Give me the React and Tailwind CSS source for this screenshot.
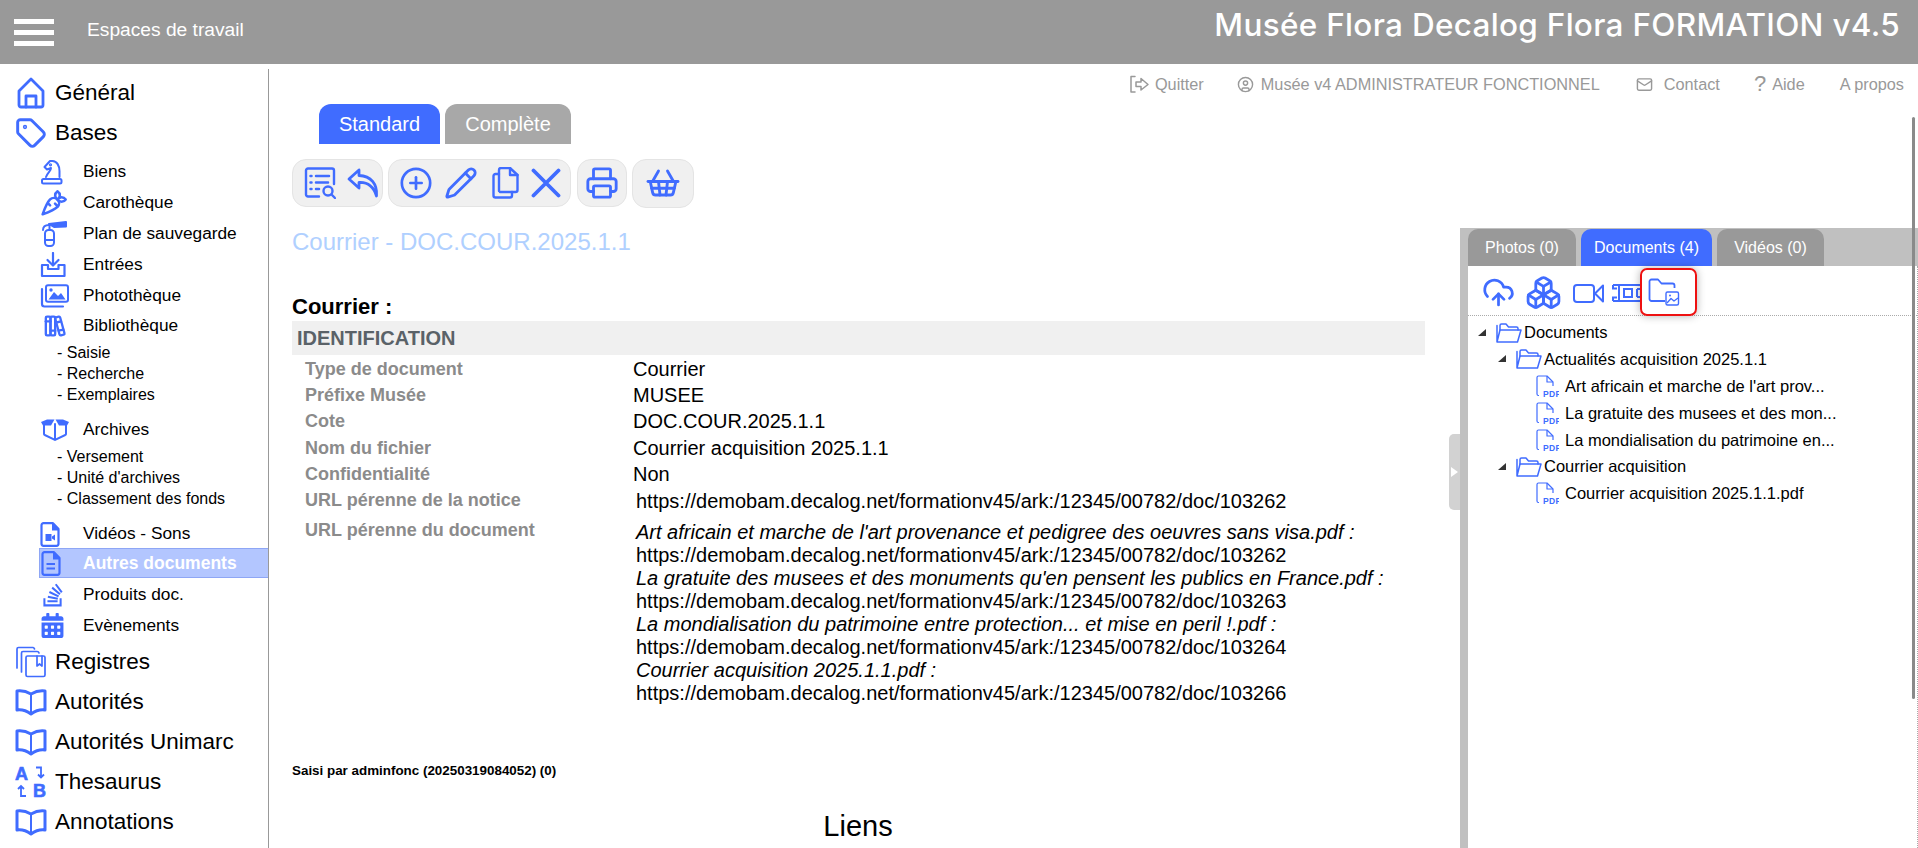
import React from "react";
import { LuTag, LuCarrot, LuPrinter, LuShoppingBasket, LuCirclePlus, LuPencil, LuCloudUpload, LuBoxes, LuCircleUser, LuMail } from "react-icons/lu";
import { TbBooks } from "react-icons/tb";
import { FaStackOverflow, FaCalendarAlt } from "react-icons/fa";

const B = "#406cff";

const Ic = ({ w = 24, h = 24, vb, sw = 2, children, className = "" }) => (
  <svg width={w} height={h} viewBox={vb || `0 0 ${w} ${h}`} fill="none" stroke={B} strokeWidth={sw} strokeLinecap="round" strokeLinejoin="round" className={className}>{children}</svg>
);

const Home = () => (
  <Ic w={30} h={32} sw={2.8} className="ml-[1px]"><path d="M3 14 L15 2 L27 14 V28 a2 2 0 0 1 -2 2 H5 a2 2 0 0 1 -2 -2 Z" /><path d="M10 30 V19 H20 V30" /></Ic>
);
const BookOpen = () => (
  <Ic w={32} h={30} sw={3}><path d="M2 4 Q9 3 16 7 Q23 3 30 4 V23 Q23 22 16 27 Q9 22 2 23 Z" /><path d="M16 7 V27" strokeWidth="2" /></Ic>
);
const Knight = () => (
  <Ic w={23} h={26} sw={2}>
    <path d="M6 18 C8 13 11 12 11 9 L7 10.500 L4.500 8 L10 2 H12.500 C17 2 19.500 7 19.500 12 V18" />
    <rect x="2" y="20" width="19.500" height="4.500" rx="1.500" />
    <circle cx="10.500" cy="5.800" r=".6" />
  </Ic>
);
const Registres = () => (
  <Ic w={32} h={32} sw={1.7}>
    <path d="M2 22 V3 a1.5 1.5 0 0 1 1.500 -1.500 H18 a2 2 0 0 1 1.500 1.500" />
    <path d="M6.500 26 V7 a1.500 1.500 0 0 1 1.500 -1.500 H22 a2 2 0 0 1 2 1.500" />
    <rect x="11" y="10" width="19" height="20.500" rx="1.500" />
    <path d="M22 10 V20 L24.500 18 L27 20 V10" />
  </Ic>
);
const Extinguisher = () => (
  <svg width="28" height="26" viewBox="0 0 28 26" fill="none" stroke={B} strokeWidth="2" strokeLinecap="round" strokeLinejoin="round">
    <rect x="5" y="9" width="9" height="16" rx="3.500" />
    <path d="M5 19 H14" />
    <path d="M9.500 9 V3" />
    <path d="M3 9 C3 6 5 4 9 4" />
    <path d="M9 3 L26 1 V5.500 L14 6 Z" fill={B} />
  </svg>
);
const InboxIn = () => (
  <Ic w={26} h={26} sw={2.2}><path d="M13 1 V13" /><path d="M7.500 8 L13 13.500 L18.500 8" /><path d="M8 13 H2 V24 H24.500 V13 H18.500 V17 H8 Z" /></Ic>
);
const Images = () => (
  <svg width="29" height="24" viewBox="0 0 29 24">
    <rect x="6" y="1.200" width="22" height="16.500" rx="2" fill="none" stroke={B} strokeWidth="2" />
    <path d="M8.500 15.500 L14 8 L18 12 L21 9 L25.500 15.500 Z" fill={B} />
    <circle cx="11" cy="6" r="1.700" fill={B} />
    <path d="M2 5 V20 a2.500 2.500 0 0 0 2.500 2.500 H23" fill="none" stroke={B} strokeWidth="2.200" strokeLinecap="round" />
  </svg>
);
const BoxOpen = () => (
  <svg width="30" height="22" viewBox="0 0 30 22">
    <path d="M1 3 L7 0.500 H14.500 L11 6.500 L3 6.500 Z" fill={B} />
    <path d="M29 3 L23 0.500 H15.500 L19 6.500 L27 6.500 Z" fill={B} />
    <path d="M4 6 V15 a1 1 0 0 0 .8 1 L15 20.800 L25.200 16 a1 1 0 0 0 .8 -1 V6 M15 5 V20.500" fill="none" stroke={B} strokeWidth="2" strokeLinecap="round" />
  </svg>
);
const FileBase = ({ children }) => (
  <svg width="20" height="25" viewBox="0 0 20 25">
    <path d="M13 1.200 H3.500 a2 2 0 0 0 -2 2 V21.800 a2 2 0 0 0 2 2 H16.500 a2 2 0 0 0 2 -2 V7 Z" fill="none" stroke={B} strokeWidth="2.200" strokeLinejoin="round" />
    <path d="M12 1 H13.500 L19 6.500 V8.500 H12 Z" fill={B} />
    {children}
  </svg>
);
const ThesaurusIc = () => (
  <svg width="32" height="32" viewBox="0 0 32 32" fontFamily="Liberation Sans, sans-serif" fontWeight="700" fontSize="18" fill={B} stroke={B} strokeWidth="0.600">
    <text x="0" y="14">A</text>
    <text x="18" y="31">B</text>
    <path d="M21 1.500 H26 V11 M23 8.500 L26 11.500 L29 8.500" fill="none" stroke={B} strokeWidth="1.800" />
    <path d="M11 30 H6 V20 M3 23 L6 20 L9 23" fill="none" stroke={B} strokeWidth="1.800" />
  </svg>
);

const big = (label, icon, cls) => (
  <div className={`flex h-10 items-center ${cls || ""}`}>
    <span className="ml-[15px] flex w-[40px] justify-start">{icon}</span>
    <span className="text-[22.500px] text-black">{label}</span>
  </div>
);
const sub = (label, icon, cls) => (
  <div className={`flex items-center ${cls}`}>
    <span className="ml-[40px] flex w-[43px] justify-start">{icon}</span>
    <span className="text-[17.300px] text-black">{label}</span>
  </div>
);
const leaf = (t) => <div className="ml-[57px] h-[21px] text-[16px] leading-[21px] text-black">- {t}</div>;

const Sidebar = () => (
  <aside className="relative w-[269px] shrink-0 pt-[9px]">
    <div className="absolute right-0 top-[5px] bottom-0 w-[1px] bg-[#999]" />
    {big("Général", <Home />)}
    {big("Bases", <LuTag size={32} color={B} strokeWidth={2.200} />)}
    <div className="mt-[4px]" />
    {sub("Biens", <Knight />, "h-[30.800px]")}
    {sub("Carothèque", <LuCarrot size={28} color={B} strokeWidth={2.200} />, "h-[30.800px]")}
    {sub("Plan de sauvegarde", <Extinguisher />, "h-[30.800px]")}
    {sub("Entrées", <InboxIn />, "h-[30.800px]")}
    {sub("Photothèque", <Images />, "h-[30.800px]")}
    {sub("Bibliothèque", <TbBooks size={28} color={B} />, "h-[30.800px]")}
    <div className="mt-[0.500px]">{leaf("Saisie")}{leaf("Recherche")}{leaf("Exemplaires")}</div>
    <div className="mt-[10px]" />
    {sub("Archives", <BoxOpen />, "h-[30px]")}
    <div className="mt-[0.500px]">{leaf("Versement")}{leaf("Unité d'archives")}{leaf("Classement des fonds")}</div>
    <div className="mt-[10.500px]" />
    {sub("Vidéos - Sons", <FileBase><path d="M5.500 12 H11.500 V19 H5.500 Z M12 14.500 L15 12.500 V18.500 L12 16.500 Z" fill={B} /></FileBase>, "h-[30px]")}
    <div className="-mt-[1px] ml-[39px] h-[30px] border border-[#8ea6f5] bg-[#b3c6ff]">
      <div className="flex h-full items-center">
        <span className="ml-[1px] flex w-[42px]"><FileBase><path d="M5.500 13 H14 M5.500 17.500 H14" stroke={B} strokeWidth="2" /></FileBase></span>
        <span className="text-[17.500px] font-bold text-white">Autres documents</span>
      </div>
    </div>
    <div className="mt-[1.500px]" />
    {sub("Produits doc.", <FaStackOverflow size={26} color={B} />, "h-[30.500px]")}
    {sub("Evènements", <FaCalendarAlt size={25} color={B} />, "h-[30.500px]")}
    <div className="mt-[1.500px]" />
    {big("Registres", <Registres />)}
    {big("Autorités", <BookOpen />)}
    {big("Autorités Unimarc", <BookOpen />)}
    {big("Thesaurus", <ThesaurusIc />)}
    {big("Annotations", <BookOpen />)}
  </aside>
);

const TopLinks = () => (
  <div className="flex h-10 items-center justify-end pr-[14px] text-[16.300px] text-[#999]">
    <svg width="21" height="19" viewBox="0 0 21 19" fill="none" stroke="#999" strokeWidth="1.500" strokeLinejoin="round" strokeLinecap="round"><path d="M6 1.500 H2 V17 H6" /><path d="M7 7 H12 V3.500 L19 9.500 L12 15 V11.500 H7 Z" /></svg>
    <span className="ml-[5px]">Quitter</span>
    <LuCircleUser size={17} color="#999" className="ml-[33px]" />
    <span className="ml-[7px]">Musée v4 ADMINISTRATEUR FONCTIONNEL</span>
    <LuMail size={17} color="#999" className="ml-[36px]" />
    <span className="ml-[11px]">Contact</span>
    <span className="ml-[34px] text-[22px] leading-none">?</span>
    <span className="ml-[6px]">Aide</span>
    <span className="ml-[35px]">A propos</span>
  </div>
);

const Group = ({ w, children, cls }) => (
  <div className={`flex items-center rounded-[14px] border border-[#e4e4e4] bg-[#f0f0f0] ${w} ${cls || ""}`}>{children}</div>
);

const ListSearch = () => (
  <Ic w={32} h={32} sw={2.400}>
    <path d="M15 29.500 H4 a2 2 0 0 1 -2 -2 V3.500 a2 2 0 0 1 2 -2 H28 a2 2 0 0 1 2 2 V17" />
    <path d="M12 9 H25 M12 15.500 H24 M6.500 9 H7.500 M6.500 15.500 H7.500 M6.500 22 H7.500 M12 22 H15" strokeWidth="2.500" />
    <circle cx="24" cy="24" r="4.500" /><path d="M27.500 27.500 L31 31" />
  </Ic>
);
const ReplyIc = () => (
  <Ic w={32} h={30} sw={2.800}><path d="M12 2 L2 11 L12 20 V14.500 C20 14 26 17 29.500 28 C30.500 16 24 8 12 7.500 Z" /></Ic>
);
const CopyIc = () => (
  <Ic w={27} h={32} sw={2.400}>
    <path d="M7 24 V3 a2 2 0 0 1 2 -2 H18 L25.500 8 V23 a2 2 0 0 1 -2 2 H8" /><path d="M18 1 V8 H25.500" />
    <path d="M7 7 H3.500 a2 2 0 0 0 -2 2 V28.500 a2 2 0 0 0 2 2 H18 a2 2 0 0 0 2 -2 V25" />
  </Ic>
);
const XIc = () => (
  <Ic w={30} h={30} sw={3.800}><path d="M2.500 2.500 L27.500 27.500 M27.500 2.500 L2.500 27.500" /></Ic>
);
const Toolbar = () => (
  <div className="ml-[23px] mt-[15px] flex h-[48px] items-center gap-[5px]">
    <Group w="w-[91px] h-[48px] pl-[11px] gap-[11px]"><ListSearch /><ReplyIc /></Group>
    <Group w="w-[183px] h-[48px] pl-[10px]">
      <LuCirclePlus size={34} color={B} strokeWidth={1.900} />
      <LuPencil size={34} color={B} strokeWidth={2} className="ml-[11px]" />
      <span className="ml-[14px] flex"><CopyIc /></span>
      <span className="ml-[12px] flex"><XIc /></span>
    </Group>
    <Group w="w-[50px] h-[48px] justify-center" cls="ml-[1px]"><LuPrinter size={34} color={B} strokeWidth={2} /></Group>
    <Group w="w-[62px] h-[49px] justify-center"><LuShoppingBasket size={36} color={B} strokeWidth={1.900} /></Group>
  </div>
);

const Row = ({ label, children, cls = "h-[26.200px]", vcls = "text-[20px]" }) => (
  <div className={`flex ${cls} leading-[26px]`}>
    <div className="w-[341px] shrink-0 pl-[13px] text-[18px] font-bold text-[#8b8b8b]">{label}</div>
    <div className={`text-black ${vcls}`}>{children}</div>
  </div>
);

const docs = [
  ["Art africain et marche de l'art provenance et pedigree des oeuvres sans visa.pdf :", "103262"],
  ["La gratuite des musees et des monuments qu'en pensent les publics en France.pdf :", "103263"],
  ["La mondialisation du patrimoine entre protection... et mise en peril !.pdf :", "103264"],
  ["Courrier acquisition 2025.1.1.pdf :", "103266"],
];

const Center = () => (
  <div className="min-w-0 flex-1">
    <div className="ml-[50px] flex h-10 items-stretch gap-[5px]">
      <div className="flex w-[121px] items-center justify-center rounded-t-[12px] bg-[#406cff] text-[20px] text-white">Standard</div>
      <div className="flex w-[126px] items-center justify-center rounded-t-[12px] bg-[#a8a8a8] text-[20px] text-white">Complète</div>
    </div>
    <Toolbar />
    <div className="ml-[23px] mt-[19px] h-8 text-[24px] leading-8 text-[#b0d0ff]">Courrier - DOC.COUR.2025.1.1</div>
    <div className="ml-[23px] mt-[35px] h-[28px] text-[22px] font-bold leading-[28px] text-black">Courrier :</div>
    <div className="ml-[23px] w-[1133px]">
      <div className="flex h-[34px] items-center bg-[#f0f0f0] pl-[5px] text-[20px] font-bold text-[#5a6268]">IDENTIFICATION</div>
      <div className="pt-[1px]">
        <Row label="Type de document">Courrier</Row>
        <Row label="Préfixe Musée">MUSEE</Row>
        <Row label="Cote">DOC.COUR.2025.1.1</Row>
        <Row label="Nom du fichier">Courrier acquisition 2025.1.1</Row>
        <Row label="Confidentialité">Non</Row>
      </div>
      <Row label="URL pérenne de la notice" cls="h-[30px]" vcls="pl-[3px] pt-[1px] text-[20px]">https://demobam.decalog.net/formationv45/ark:/12345/00782/doc/103262</Row>
      <div className="flex">
        <div className="w-[341px] shrink-0 pl-[13px] text-[18px] font-bold leading-[26px] text-[#8b8b8b]">URL pérenne du document</div>
        <div className="pl-[3px] pt-[4.500px] text-[20px] leading-[23px] text-black">
          {docs.map(([t, id]) => (
            <React.Fragment key={id}>
              <div className="italic">{t}</div>
              <div>https://demobam.decalog.net/formationv45/ark:/12345/00782/doc/{id}</div>
            </React.Fragment>
          ))}
        </div>
      </div>
    </div>
    <div className="ml-[23px] mt-[58px] text-[13.400px] font-bold leading-4 text-black">Saisi par adminfonc (20250319084052) (0)</div>
    <div className="mt-[29px] w-[1178px] text-center text-[29px] leading-9 text-black">Liens</div>
  </div>
);

const FolderOpen = () => (
  <Ic w={26} h={20} sw={1.500}><path d="M4 7 V2.500 a1.500 1.500 0 0 1 1.500 -1.500 H10 L12.500 4 H20.500 a1.500 1.500 0 0 1 1.500 1.500 V7" /><path d="M1 19 V2.500 M4 7 H25 L21.500 19 H1 Z" /></Ic>
);
const Pdf = () => (
  <svg width="23" height="23" viewBox="0 0 23 23" fill="none" stroke={B} strokeWidth="1.200" strokeLinejoin="round">
    <path d="M3 20.500 H2.500 a1.500 1.500 0 0 1 -1.500 -1.500 V2.500 a1.500 1.500 0 0 1 1.500 -1.500 H11 L17 7 V11" />
    <path d="M11 1 V7 H17" />
    <text x="7" y="22" fontFamily="Liberation Sans, sans-serif" fontSize="8.500" fontWeight="700" fill={B} stroke="none" letterSpacing="0.300">PDF</text>
  </svg>
);
const Tri = () => (
  <svg width="8" height="8" viewBox="0 0 8 8" className="shrink-0"><path d="M8 0 V7 H0 Z" fill="#333" /></svg>
);

const TreeNode = ({ tri, icon, label, cls }) => (
  <div className={`flex items-center ${cls}`}>
    {tri ? <span className="flex w-[18px]"><Tri /></span> : <span className="w-[18px]" />}
    {icon}
    <span className="whitespace-nowrap text-[16.500px] text-black">{label}</span>
  </div>
);

const Right = () => (
  <div className="relative mt-[124px] flex w-[458px] shrink-0 flex-col">
    <div className="absolute -left-[11px] top-[206px] flex h-[76px] w-[11px] items-center justify-center rounded-l-[5px] bg-[#d2d2d2]">
      <svg width="7" height="10" viewBox="0 0 7 10"><path d="M0 0 L7 5 L0 10 Z" fill="#fff" /></svg>
    </div>
    <div className="flex h-[38px] items-end gap-[5px] bg-[#c0c0c0] pl-2 text-[16px] text-white">
      <div className="flex h-[37px] w-[108px] items-center justify-center rounded-t-[10px] bg-[#999]">Photos (0)</div>
      <div className="flex h-[37px] w-[131px] items-center justify-center rounded-t-[10px] bg-[#406cff]">Documents (4)</div>
      <div className="flex h-[37px] w-[107px] items-center justify-center rounded-t-[10px] bg-[#999]">Vidéos (0)</div>
    </div>
    <div className="flex-1 border-l-[8px] border-[#c0c0c0]">
      <div className="h-full border-r border-dotted border-[#aaa]">
        <div className="relative flex h-[50px] items-center border-b border-dotted border-[#aaa] pl-[14px] pt-[4px]">
          <LuCloudUpload size={33} color={B} strokeWidth={2} />
          <LuBoxes size={37} color={B} strokeWidth={1.800} className="ml-[10px]" />
          <svg width="32" height="24" viewBox="0 0 32 24" fill="none" stroke={B} strokeWidth="2" strokeLinejoin="round" className="ml-[11px]"><rect x="1" y="4" width="20" height="17" rx="3" /><path d="M30 4.500 V20.500 L22 12.500 Z" /></svg>
          <svg width="30" height="24" viewBox="0 0 30 24" fill="none" stroke={B} strokeWidth="2" className="ml-[7px]"><path d="M1 4 H30 M1 20 H30 M7 4 V20 M1 4 V7.500 H5 M1 20 V16.500 H5 M12 8 H20 V16 H12 Z M25 8 V16 M25 8 H30 M25 16 H30" /></svg>
          <div className="absolute left-[172px] top-[2px] h-[48px] w-[57px] rounded-[7px] border-2 border-[#ee1111] shadow-[0_0_8px_rgba(0,0,0,0.3)]" />
          <svg width="32" height="30" viewBox="0 0 32 30" fill="none" stroke={B} strokeWidth="1.800" strokeLinejoin="round" className="relative ml-[6px]">
            <path d="M17 23 H3.500 a2 2 0 0 1 -2 -2 V3.500 a2 2 0 0 1 2 -2 H10 L13.500 5.500 H24.500 a2 2 0 0 1 2 2 V10" />
            <rect x="18" y="14" width="12.500" height="13" rx="1.500" strokeWidth="1.400" />
            <path d="M19 25 L23 20.500 L26 23 L30 20" strokeWidth="1.300" />
            <circle cx="22" cy="17.500" r="1" fill={B} stroke="none" />
          </svg>
        </div>
        <div className="pl-[10px] pt-[3px]">
          <TreeNode tri icon={<span className="mr-[2px] flex"><FolderOpen /></span>} label="Documents" cls="h-[27px]" />
          <div className="pl-[20px]">
            <TreeNode tri icon={<span className="mr-[2px] flex"><FolderOpen /></span>} label="Actualités acquisition 2025.1.1" cls="h-[26.500px]" />
            <div className="pl-[20px]">
              {["Art africain et marche de l'art prov...", "La gratuite des musees et des mon...", "La mondialisation du patrimoine en..."].map((t) => (
                <TreeNode key={t} icon={<span className="mr-[6px] flex"><Pdf /></span>} label={t} cls="h-[27px]" />
              ))}
            </div>
            <TreeNode tri icon={<span className="mr-[2px] flex"><FolderOpen /></span>} label="Courrier acquisition" cls="h-[26.500px]" />
            <div className="pl-[20px]">
              <TreeNode icon={<span className="mr-[6px] flex"><Pdf /></span>} label="Courrier acquisition 2025.1.1.pdf" cls="h-[27px]" />
            </div>
          </div>
        </div>
      </div>
    </div>
    <div className="absolute right-[3px] -top-[111px] h-[582px] w-[3px] rounded-full bg-[#8a8a8a]" />
  </div>
);

export default function App() {
  return (
    <div className="flex h-[848px] w-[1918px] flex-col overflow-hidden bg-white font-['Liberation_Sans',Arial,sans-serif]">
      <header className="flex h-16 shrink-0 items-center bg-[#999] text-white">
        <div className="ml-[14px] flex h-[27px] w-10 flex-col justify-between">
          <span className="h-[5px] bg-white" /><span className="h-[5px] bg-white" /><span className="h-[5px] bg-white" />
        </div>
        <span className="ml-[33px] -mt-[4px] text-[19.200px]">Espaces de travail</span>
        <span className="ml-auto mr-[18px] -mt-[14px] whitespace-nowrap font-['Inter',sans-serif] text-[31.500px] font-medium tracking-[0.300px]">Musée Flora Decalog Flora FORMATION v4.5</span>
      </header>
      <div className="flex min-h-0 flex-1">
        <Sidebar />
        <main className="flex min-w-0 flex-1 flex-col">
          <TopLinks />
          <div className="flex min-h-0 flex-1">
            <Center />
            <Right />
          </div>
        </main>
      </div>
    </div>
  );
}
